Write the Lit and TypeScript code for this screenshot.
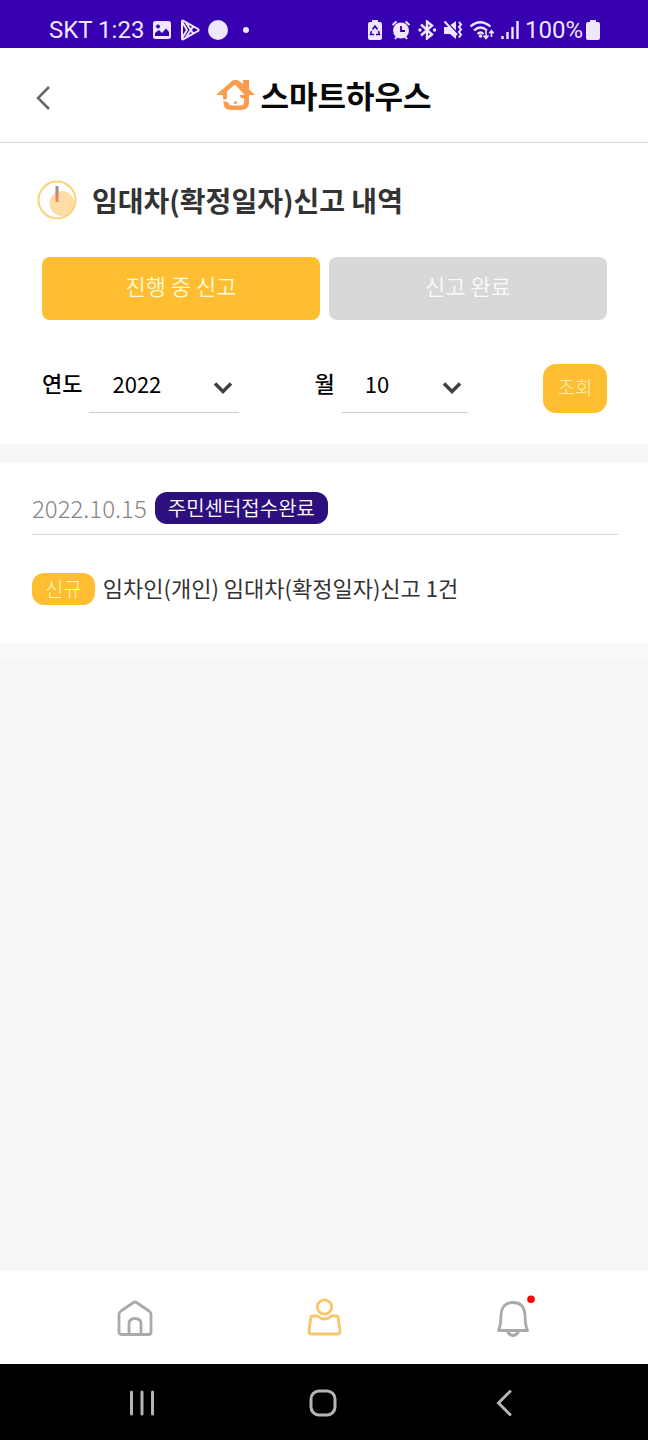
import { LitElement, html, css, svg } from "lit";
import { customElement, state } from "lit/decorators.js";
import { classMap } from "lit/directives/class-map.js";

@customElement("status-bar")
class StatusBar extends LitElement {
  static styles = css`
    :host { display: block; background: #3700b0; color: #efe6ff; }
    .bar { display: flex; align-items: center; justify-content: space-between; height: 48px; padding: 12px 48px 0 49px; box-sizing: border-box; font: 400 24px/36px Roboto, sans-serif; }
    .side { display: flex; align-items: center; gap: 8px; }
    .status { gap: 6px; }
    .level { display: flex; align-items: center; gap: 3px; }
    svg { display: block; fill: none; stroke: currentColor; stroke-width: 2; }
    .solid { fill: currentColor; stroke: none; }
    .cut { fill: #3700b0; stroke: none; }
    .dark { stroke: #3700b0; }
  `;
  render() {
    return html`<div class="bar">
      <div class="side">
        <span>SKT 1:23</span>
        <svg width="20" height="20" viewBox="0 0 20 20" aria-hidden="true"><rect class="solid" x="1" y="1" width="18" height="18" rx="2.5"/><circle class="cut" cx="6" cy="6.5" r="2"/><path class="cut" d="M3 16v-3l4-3 3 3 4-4.500 3 3.500v4z"/></svg>
        <svg width="20" height="22" viewBox="0 0 20 22" aria-hidden="true"><path stroke-width="2" stroke-linejoin="round" d="M2 2.500Q2 1 3.500 1.800L18 10q1.300 1 0 2L3.500 20.200Q2 21 2 19.500zM6 4l7.500 11M6 18l7.500-11M2.500 3.500L7 11l-4.500 7.500"/></svg>
        <svg width="20" height="22" viewBox="0 0 20 22" aria-hidden="true"><circle class="solid" cx="10" cy="11" r="10"/></svg>
        <svg width="20" height="20" viewBox="0 0 20 20" aria-hidden="true"><circle class="solid" cx="10" cy="10" r="3"/></svg>
      </div>
      <div class="side status">
        <svg width="17" height="20" viewBox="0 0 17 20" aria-hidden="true"><path class="solid" d="M4 0h6v2h2q2 0 2 2v14q0 2-2 2H2q-2 0-2-2V4q0-2 2-2h2z"/><path class="dark" stroke-width="1.500" d="M4.500 9.500L7 6l2.500 3.500M10.500 11l1 3.500H8M3.500 11l-1 3.500H6"/></svg>
        <svg width="20" height="20" viewBox="0 0 20 20" aria-hidden="true"><circle class="solid" cx="10" cy="10.500" r="8"/><path d="M1.500 5L5.500 1.500M18.500 5l-4-3.500M4 19l2-2.500M16 19l-2-2.500"/><path class="dark" stroke-width="1.800" d="M10 6v5h4"/></svg>
        <svg width="20" height="20" viewBox="0 0 20 20" aria-hidden="true"><path stroke-width="2.400" d="M4 4.500L15 14.500l-5 4V1.500l5 4L4 15.500"/><path class="solid" d="M3 8.300a1.700 1.700 0 1 1 0 3.400 1.700 1.700 0 0 1 0-3.400M17.500 8.300a1.700 1.700 0 1 1 0 3.400 1.700 1.700 0 0 1 0-3.400"/></svg>
        <svg width="20" height="20" viewBox="0 0 20 20" aria-hidden="true"><path class="solid" d="M1 7h5l7 7v5l-6-5H1zM7.500 5L13 1v9.500z"/><path stroke-width="2" d="M1.500 1.500L14 15M16 2l2 2.500-2 2.500 2 2.500-2 2.500 2 2.500-2 3"/></svg>
        <svg width="26" height="20" viewBox="0 0 26 20" aria-hidden="true"><path stroke-width="2.200" d="M1.500 6.500Q11 -2 21.500 6.500M5 10.500q6.500-6 13 0M8.500 14q3-3 6 0"/><circle class="solid" cx="11.500" cy="16" r="1.800"/><path stroke-width="1.600" d="M17 11v7M14.500 15.500l2.500 3 2.500-3M22.500 17v-6M20.300 13.300l2.200-2.500 2.200 2.500"/></svg>
        <svg width="18" height="20" viewBox="0 0 18 20" aria-hidden="true"><path stroke-width="2.400" d="M1.500 19v-3M6.500 19v-7M11.500 19V7M16.500 19V1"/></svg>
        <div class="level"><span>100%</span>
        <svg width="14" height="20" viewBox="0 0 14 20" aria-hidden="true"><path class="solid" d="M4 0h6v2h2q2 0 2 2v14q0 2-2 2H2q-2 0-2-2V4q0-2 2-2h2z"/></svg></div>
      </div>
    </div>`;
  }
}

@customElement("app-header")
class AppHeader extends LitElement {
  static styles = css`
    :host { display: block; }
    header { display: grid; grid-template-columns: 64px 1fr 64px; align-items: center; height: 95px; box-sizing: border-box; background: #fff; border-bottom: 1px solid #d8d8d8; }
    button { height: 48px; padding: 5px 0 0 34px; border: 0; background: none; }
    svg { display: block; fill: none; }
    .brand { display: flex; align-items: center; justify-content: center; gap: 4px; color: #080808; text-decoration: none; font: 700 31px/40px "Noto Sans CJK KR", sans-serif; }
  `;
  render() {
    return html`<header>
      <button type="button" aria-label="뒤로"><svg width="18" height="26" viewBox="0 0 18 26"><path d="M15 2L4 13l11 11" stroke="#666" stroke-width="2.500"/></svg></button>
      <a class="brand" href="#"><svg width="40" height="34" viewBox="0 0 40 34" aria-hidden="true"><path d="M0 17L16 3q3.500-2.500 7 0l4 3V2h6v9l6 6h-6v7q0 8-8 8H15q-7.500 0-7.500-7v-2l5 1.500q0 3 3 3h9q3.500 0 3.500-3.500V20q-4 1-4-3h4.500L20 7.500q-1.200-.8-2.400 0L11 13.500V20q-2 2.500-4 1v-4z" fill="#fa9b4e"/><circle cx="19.500" cy="24.500" r="1.500" fill="#fa9b4e"/></svg><span>스마트하우스</span></a>
    </header>`;
  }
}

@customElement("report-filter")
class ReportFilter extends LitElement {
  @state() private tab = 0;
  static styles = css`
    :host { display: block; background: #fff; color: #000; }
    .panel { padding: 32px 41px 31px 42px; }
    h1 { display: flex; align-items: center; gap: 15px; margin: 0 0 32px -5px; color: #333; font-size: 28px; line-height: 50px; font-weight: 700; }
    svg { display: block; fill: none; }
    button, select { font-family: inherit; }
    .tabs { display: grid; grid-template-columns: 1fr 1fr; gap: 9px; margin-bottom: 44px; }
    .tab { height: 63px; padding: 0 0 8px; border: 0; border-radius: 8px; background: #d8d8d8; color: #fafafa; font-size: 22px; font-weight: 350; }
    .active { background: #ffbe31; color: #fffbdc; }
    .filters { display: flex; align-items: flex-start; justify-content: space-between; }
    .field { display: flex; gap: 7px; font-size: 22px; line-height: 36px; }
    .field label { font-weight: 500; }
    .pick { display: grid; align-items: center; border-bottom: 1px solid #ccc; }
    .pick > * { grid-area: 1 / 1; }
    .year { width: 150px; }
    .month { width: 126px; }
    select { appearance: none; width: 100%; height: 48px; padding: 0 40px 10px 23px; border: 0; background: none; color: #000; font-size: 22px; }
    .pick svg { justify-self: end; margin-right: 6px; pointer-events: none; }
    .search { width: 64px; height: 49px; padding: 0 0 4px; border: 0; border-radius: 13px; background: #ffbe31; color: #fff5c0; font-size: 19px; font-weight: 300; }
  `;
  private arrow() {
    return html`<svg width="20" height="14" viewBox="0 0 20 14" aria-hidden="true"><path d="M2 2.500l8 8 8-8" stroke="#404040" stroke-width="3.500"/></svg>`;
  }
  render() {
    return html`<section class="panel">
      <h1><svg width="40" height="40" viewBox="0 0 40 40" aria-hidden="true"><circle cx="25" cy="23.500" r="12.500" fill="#ffdda5"/><circle cx="20" cy="20" r="18.500" stroke="#fbd27d" stroke-width="2"/><path d="M20 6v8" stroke="#9a8f8f" stroke-width="3"/><path d="M20 13v9" stroke="#df8762" stroke-width="3"/></svg><span>임대차(확정일자)신고 내역</span></h1>
      <div class="tabs">${["진행 중 신고", "신고 완료"].map((t, i) => html`<button type="button" class=${classMap({ tab: true, active: this.tab === i })} aria-pressed=${this.tab === i} @click=${() => (this.tab = i)}>${t}</button>`)}</div>
      <form class="filters" @submit=${(e: Event) => e.preventDefault()}>
        <div class="field"><label for="year">연도</label><div class="pick year"><select id="year"><option>2022</option></select>${this.arrow()}</div></div>
        <div class="field"><label for="month">월</label><div class="pick month"><select id="month"><option>10</option></select>${this.arrow()}</div></div>
        <button class="search">조회</button>
      </form>
    </section>`;
  }
}

@customElement("report-card")
class ReportCard extends LitElement {
  static styles = css`
    :host { display: block; background: #fff; border-bottom: 17px solid #f9f9f9; }
    article { padding: 29px 30px 38px 32px; }
    .row { display: flex; align-items: center; gap: 8px; }
    .head { padding-bottom: 10px; margin-bottom: 38px; border-bottom: 1px solid #d8d8d8; }
    time { color: #858585; font-size: 24px; line-height: 32px; font-weight: 300; }
    .badge { border-radius: 12px; padding: 0 13px; font-size: 20px; line-height: 32px; }
    .done { background: #2e0f7e; color: #fff; font-weight: 350; }
    .new { background: #ffbe31; color: #fff5c0; font-weight: 300; }
    h2 { margin: 0; padding-bottom: 4px; color: #333; font-size: 22px; line-height: 28px; font-weight: 400; }
  `;
  render() {
    return html`<article>
      <div class="row head"><time datetime="2022-10-15">2022.10.15</time><span class="badge done">주민센터접수완료</span></div>
      <div class="row"><span class="badge new">신규</span><h2>임차인(개인) 임대차(확정일자)신고 1건</h2></div>
    </article>`;
  }
}

@customElement("tab-bar")
class TabBar extends LitElement {
  static styles = css`
    :host { display: block; background: #fff; }
    nav { display: flex; justify-content: space-around; height: 93px; padding: 0 40px; }
    a { display: grid; place-items: center; width: 64px; color: #aaa; }
    .on { color: #f8c568; }
    svg { display: block; fill: none; stroke: currentColor; stroke-width: 2.800; stroke-linejoin: round; overflow: visible; }
  `;
  render() {
    return html`<nav>
      <a href="#" aria-label="홈"><svg width="36" height="40" viewBox="0 0 36 40"><path d="M4 13L16.500 4.500q1.500-1 3 0L32 13q2 1.500 2 3v18q0 2.500-2.500 2.500h-27Q2 36.500 2 34V16q0-1.500 2-3zM12 36V26q0-5.500 6-5.500t6 5.500v10"/></svg></a>
      <a class="on" href="#" aria-label="내 정보"><svg width="36" height="40" viewBox="0 0 36 40"><circle cx="18.500" cy="9" r="7.200"/><path d="M6.500 18h5q7 6 14 0h5q1.500 0 1.700 1.500L34 33.500q.2 2.500-2 2.500H5q-2.200 0-2-2.500l1.800-14q.2-1.500 1.700-1.500z"/></svg></a>
      <a href="#" aria-label="알림"><svg width="36" height="40" viewBox="0 0 36 40"><path d="M3.500 32.500Q6 27 6 16.500 7 4.500 18 4.500t12 12q0 10.500 2.500 16zM12.500 33.500q2 4 5.500 4t5.500-4"/><circle cx="36" cy="1.200" r="3.800" fill="#f00" stroke="none"/></svg></a>
    </nav>`;
  }
}

@customElement("system-nav")
class SystemNav extends LitElement {
  static styles = css`
    :host { display: block; background: #000; }
    nav { display: flex; justify-content: space-around; height: 76px; padding: 2px 53px 0 51px; box-sizing: border-box; }
    button { width: 64px; display: grid; place-items: center; padding: 0; border: 0; background: none; color: #b5b5b5; }
    svg { display: block; fill: none; stroke: currentColor; stroke-width: 3; }
  `;
  private key(label: string, shape: unknown) {
    return html`<button type="button" aria-label=${label}><svg width="28" height="28" viewBox="0 0 28 28">${shape}</svg></button>`;
  }
  render() {
    return html`<nav>
      ${this.key("최근 앱", svg`<path stroke-linecap="round" d="M3.500 3v22M14 3v22M24.500 3v22"/>`)}
      ${this.key("홈 화면", svg`<rect x="2" y="2" width="24" height="24" rx="8"/>`)}
      ${this.key("이전", svg`<path stroke-linecap="round" d="M20 2.500L8.500 14 20 25.500"/>`)}
    </nav>`;
  }
}

@customElement("app-root")
class AppRoot extends LitElement {
  static styles = css`
    :host { display: flex; flex-direction: column; min-height: 100vh; background: #f7f7f7; font-family: "Noto Sans CJK KR", sans-serif; }
    main { flex: 1; display: flex; flex-direction: column; gap: 19px; }
  `;
  render() {
    return html`<status-bar></status-bar><app-header></app-header>
      <main><report-filter></report-filter><report-card></report-card></main>
      <tab-bar></tab-bar><system-nav></system-nav>`;
  }
}
